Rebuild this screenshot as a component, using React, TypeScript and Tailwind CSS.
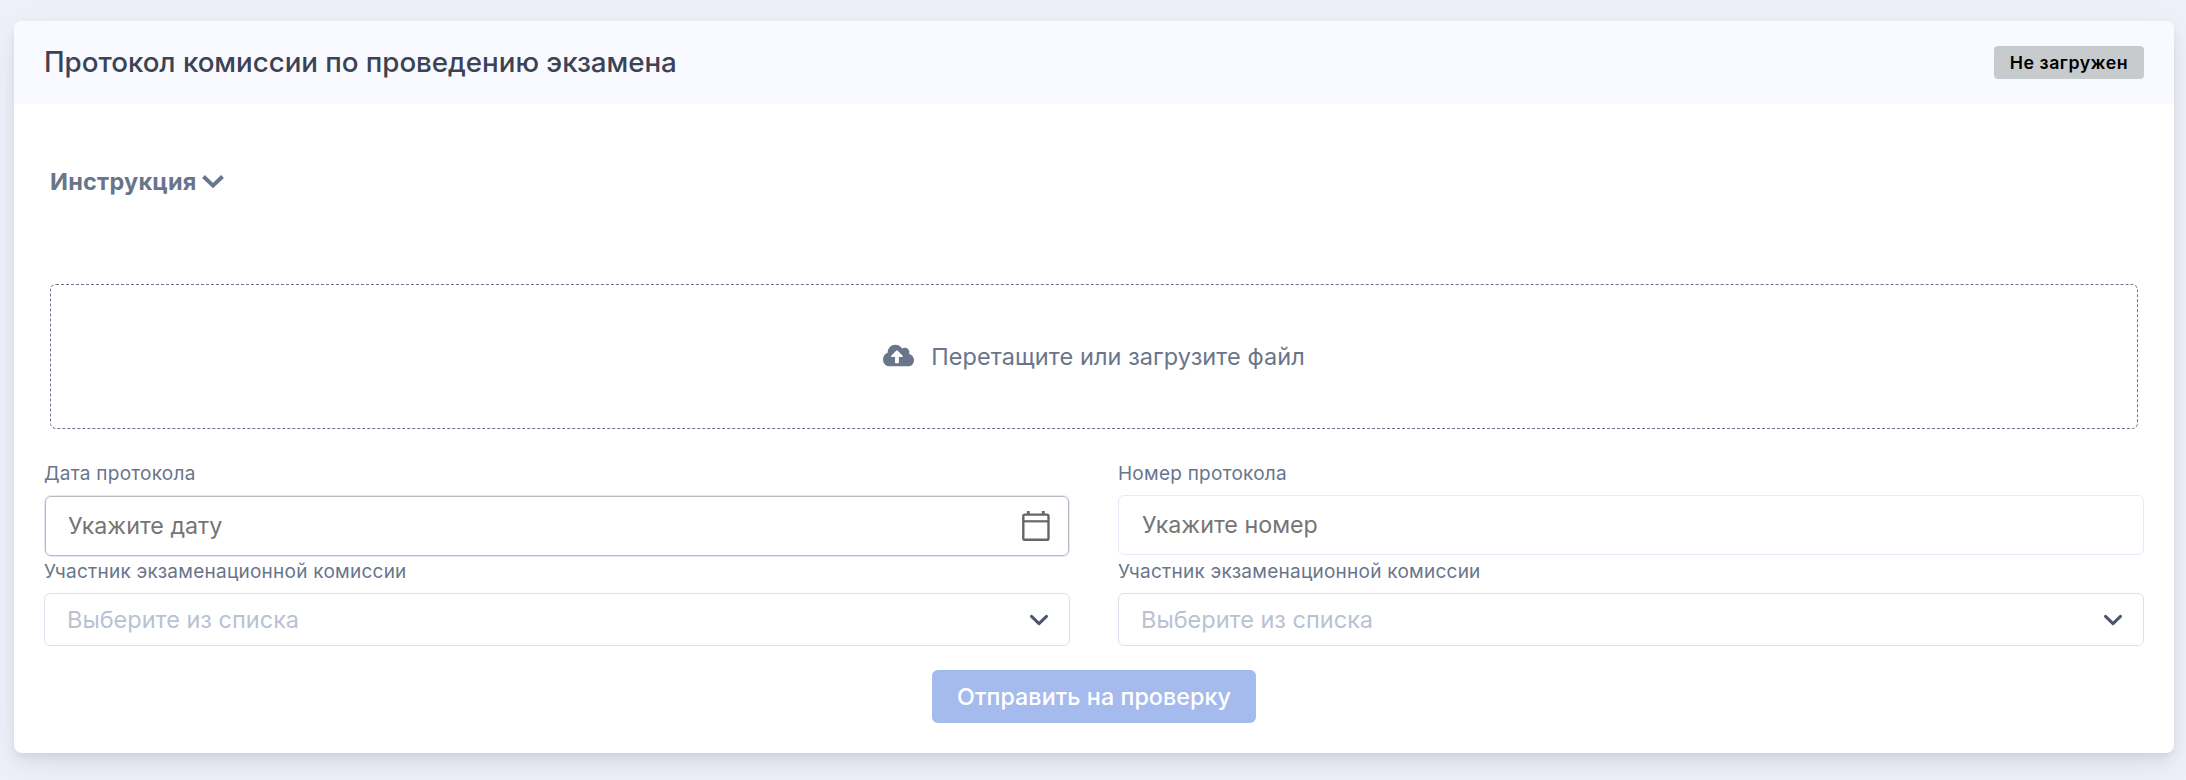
import type { ReactNode } from 'react';
import { FaCloudUploadAlt } from 'react-icons/fa';

function SelectChevron() {
  return (
    <svg width="20" height="14" viewBox="0 0 20 14" fill="none" className="shrink-0">
      <path d="M2.5 3.4 L10 10.6 L17.5 3.4" stroke="#4a5568" strokeWidth="3" strokeLinecap="round" strokeLinejoin="round" />
    </svg>
  );
}

function CalendarIcon() {
  return (
    <svg width="28" height="30" viewBox="0 0 28 30" fill="none" className="shrink-0">
      <rect x="1.3" y="3.6" width="25.2" height="25.2" rx="1.6" stroke="#666666" strokeWidth="2.4" />
      <path d="M6.3 0V4 M21.3 0V4" stroke="#666666" strokeWidth="2.8" />
      <path d="M1 10.3H26.5" stroke="#666666" strokeWidth="2.2" />
    </svg>
  );
}

function Label({ children }: { children: ReactNode }) {
  return <div className="h-6 whitespace-nowrap text-[19px] leading-6 tracking-[0.25px] text-[#69758a]">{children}</div>;
}

function MemberSelect() {
  return (
    <div>
      <Label>Участник экзаменационной комиссии</Label>
      <div className="mt-[9px] flex h-[53px] items-center justify-between rounded-[6px] border border-[#dbe1ec] bg-white pl-[22px] pr-[20px]">
        <span className="text-[23.5px] leading-none text-[#b9c2d3]">Выберите из списка</span>
        <SelectChevron />
      </div>
    </div>
  );
}

export default function App() {
  return (
    <div className="h-[780px] w-[2186px] overflow-hidden bg-[#edf0f9] pl-[14px] pt-[21px] font-['Inter',sans-serif]">
      <div className="h-[732px] w-[2160px] overflow-hidden rounded-[8px] bg-white shadow-[0_11px_53px_rgba(4,9,20,0.03),0_15px_22px_rgba(4,9,20,0.03),0_6px_13px_rgba(4,9,20,0.05),0_3px_5px_rgba(4,9,20,0.03)]">
        <header className="flex h-[83px] items-center justify-between bg-[#f9faff] px-[30px]">
          <h1 className="text-[27.75px] font-medium leading-none tracking-[-0.05px] text-[#3b4354]">
            Протокол комиссии по проведению экзамена
          </h1>
          <span className="flex h-[33px] w-[150px] items-center justify-center rounded-[4px] bg-[#c8cbce] text-[17.75px] font-semibold leading-none tracking-[0.5px] text-black">
            Не загружен
          </span>
        </header>

        <div className="px-[30px]">
          <button type="button" className="ml-[6px] mt-[63px] flex h-[30px] items-center text-[#69758a]">
            <span className="text-[23.5px] font-bold leading-none tracking-[0.22px]">Инструкция</span>
            <svg width="22" height="14" viewBox="0 0 22 14" fill="none" className="ml-[5px]">
              <path d="M1.5 1.5 L11 10.6 L20.5 1.5" stroke="currentColor" strokeWidth="4" />
            </svg>
          </button>

          <div className="mx-[6px] mt-[87px] flex h-[145px] items-center justify-center rounded-[6px] border border-dashed border-[#69758a] text-[#69758a]">
            <FaCloudUploadAlt className="mb-[2px] mr-[17px] h-[25px] w-[31px]" />
            <span className="text-[23.5px] leading-none tracking-[0.08px]">Перетащите или загрузите файл</span>
          </div>

          <div className="mt-[33px] grid grid-cols-2 gap-x-[48px]">
            <div className="h-[98px]">
              <Label>Дата протокола</Label>
              <div className="mt-[9px] h-[62px] rounded-[7px] border border-[#e6e7f6]">
                <div className="flex h-full items-center justify-between rounded-[6px] border border-[#b7b8c2] bg-white pl-[22px] pr-[18px]">
                  <span className="text-[23.25px] leading-none text-[#757575]">Укажите дату</span>
                  <CalendarIcon />
                </div>
              </div>
            </div>
            <div className="h-[98px]">
              <Label>Номер протокола</Label>
              <div className="mt-[9px] flex h-[60px] items-center rounded-[6px] border border-[#e8e8f8] bg-white pl-[23px]">
                <span className="text-[23.25px] leading-none text-[#757575]">Укажите номер</span>
              </div>
            </div>
            <MemberSelect />
            <MemberSelect />
          </div>

          <div className="mt-[24px] flex justify-center">
            <button
              type="button"
              className="h-[53px] w-[324px] rounded-[6px] border-t border-[#9fb8ee] bg-[#a5bbee] text-[23.25px] font-medium leading-none tracking-[0.08px] text-white"
            >
              Отправить на проверку
            </button>
          </div>
        </div>
      </div>
    </div>
  );
}
